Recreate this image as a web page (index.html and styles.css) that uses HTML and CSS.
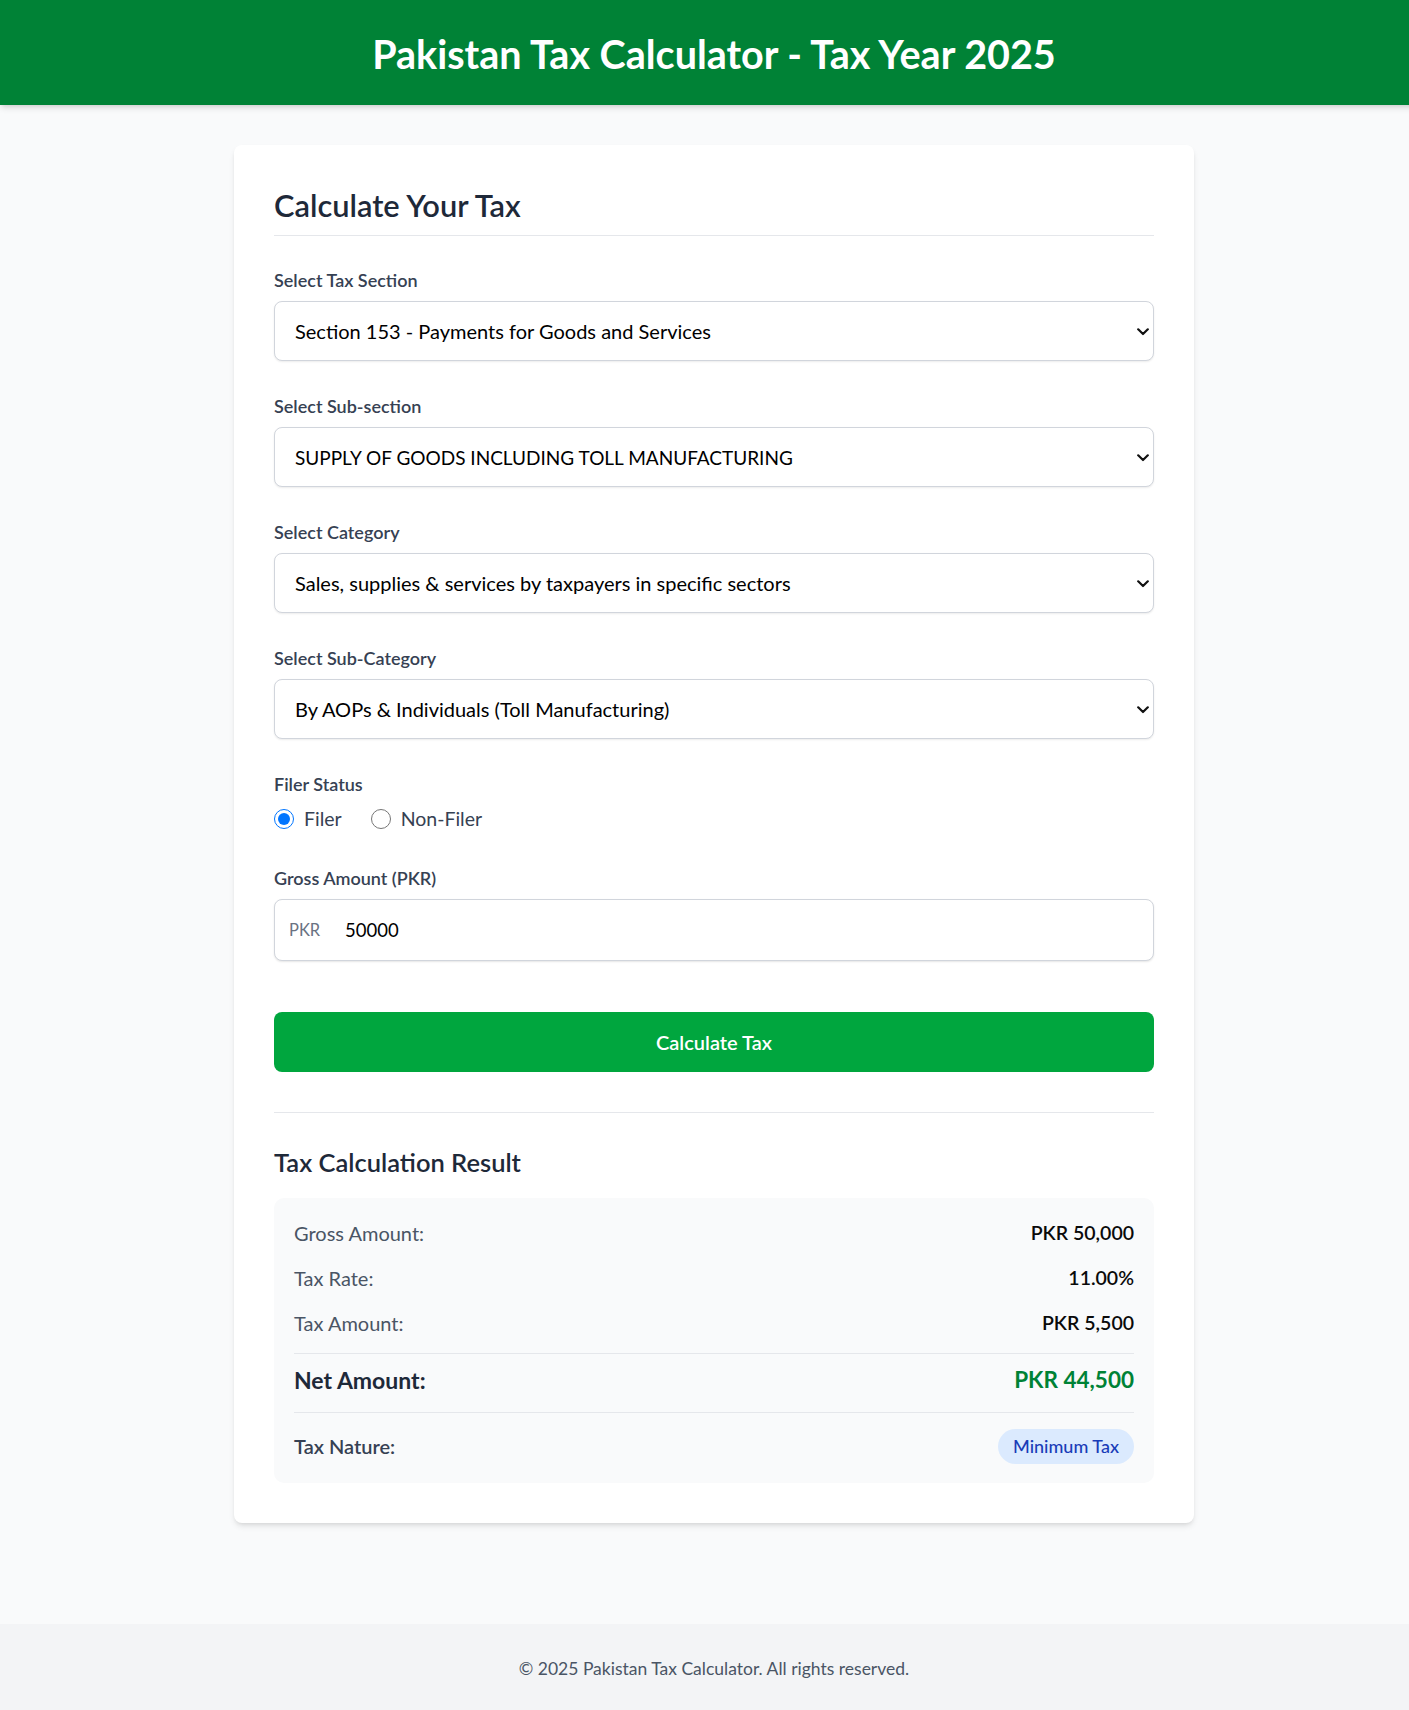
FILE: index.html
```html
<!DOCTYPE html>
<html lang="en">
<head>
<meta charset="utf-8">
<title>Pakistan Tax Calculator - Tax Year 2025</title>
<link rel="stylesheet" href="styles.css">
</head>
<body>
<div class="page">
  <header class="site-header">
    <h1 class="site-title">Pakistan Tax Calculator - Tax Year 2025</h1>
  </header>

  <main class="main">
    <section class="card">
      <h2 class="card-title">Calculate Your Tax</h2>

      <form class="form">
        <div class="field">
          <label class="field-label" for="section">Select Tax Section</label>
          <div class="select-wrap">
            <select class="select" id="section">
              <option>Section 153 - Payments for Goods and Services</option>
            </select>
            <svg class="chevron" width="12" height="8" viewBox="0 0 12 8"><polyline points="1.2,1.3 6,6 10.8,1.3" fill="none" stroke="#111" stroke-width="2.2" stroke-linecap="round" stroke-linejoin="round"/></svg>
          </div>
        </div>

        <div class="field">
          <label class="field-label" for="subsection">Select Sub-section</label>
          <div class="select-wrap">
            <select class="select select-caps" id="subsection">
              <option>SUPPLY OF GOODS INCLUDING TOLL MANUFACTURING</option>
            </select>
            <svg class="chevron" width="12" height="8" viewBox="0 0 12 8"><polyline points="1.2,1.3 6,6 10.8,1.3" fill="none" stroke="#111" stroke-width="2.2" stroke-linecap="round" stroke-linejoin="round"/></svg>
          </div>
        </div>

        <div class="field">
          <label class="field-label" for="category">Select Category</label>
          <div class="select-wrap">
            <select class="select" id="category">
              <option>Sales, supplies &amp; services by taxpayers in specific sectors</option>
            </select>
            <svg class="chevron" width="12" height="8" viewBox="0 0 12 8"><polyline points="1.2,1.3 6,6 10.8,1.3" fill="none" stroke="#111" stroke-width="2.2" stroke-linecap="round" stroke-linejoin="round"/></svg>
          </div>
        </div>

        <div class="field">
          <label class="field-label" for="subcategory">Select Sub-Category</label>
          <div class="select-wrap">
            <select class="select" id="subcategory">
              <option>By AOPs &amp; Individuals (Toll Manufacturing)</option>
            </select>
            <svg class="chevron" width="12" height="8" viewBox="0 0 12 8"><polyline points="1.2,1.3 6,6 10.8,1.3" fill="none" stroke="#111" stroke-width="2.2" stroke-linecap="round" stroke-linejoin="round"/></svg>
          </div>
        </div>

        <div class="field">
          <span class="field-label">Filer Status</span>
          <div class="radio-row">
            <label class="radio-option"><input class="radio" type="radio" name="filer" checked><span>Filer</span></label>
            <label class="radio-option"><input class="radio" type="radio" name="filer"><span>Non-Filer</span></label>
          </div>
        </div>

        <div class="field">
          <label class="field-label" for="amount">Gross Amount (PKR)</label>
          <div class="input-wrap">
            <span class="prefix">PKR</span>
            <input class="input" id="amount" type="text" value="50000">
          </div>
        </div>

        <button class="btn" type="button">Calculate Tax</button>
      </form>

      <div class="result">
        <h3 class="result-title">Tax Calculation Result</h3>
        <div class="result-box">
          <div class="row">
            <span class="row-label">Gross Amount:</span>
            <span class="row-value">PKR 50,000</span>
          </div>
          <div class="row">
            <span class="row-label">Tax Rate:</span>
            <span class="row-value">11.00%</span>
          </div>
          <div class="row">
            <span class="row-label">Tax Amount:</span>
            <span class="row-value">PKR 5,500</span>
          </div>
          <div class="row row-net">
            <span class="net-label">Net Amount:</span>
            <span class="net-value">PKR 44,500</span>
          </div>
          <div class="row row-nature">
            <span class="nature-label">Tax Nature:</span>
            <span class="badge">Minimum Tax</span>
          </div>
        </div>
      </div>
    </section>
  </main>

  <footer class="site-footer">
    <p class="footer-text">© 2025 Pakistan Tax Calculator. All rights reserved.</p>
  </footer>
</div>
</body>
</html>
```

FILE: styles.css
```css
html, body {
  margin: 0;
  padding: 0;
  overflow: hidden;
}

body {
  background: #f9fafb;
  font-family: "Lato", "Segoe UI", "Noto Sans", sans-serif;
  color: #1e2939;
  line-height: 1.6;
}

.page {
  width: 1428px;
}

.site-header {
  background: #008236;
  padding: 25px 16px 23px;
  box-shadow: 0 4px 6px -1px rgba(0,0,0,0.12), 0 2px 4px -2px rgba(0,0,0,0.1);
  position: relative;
  z-index: 1;
}

.site-title {
  margin: 0;
  text-align: center;
  color: #ffffff;
  font-size: 39.5px;
  font-weight: 700;
  line-height: 57px;
}

.main {
  padding: 40px 0 101px;
}

.card {
  width: 960px;
  box-sizing: border-box;
  margin: 0 auto;
  background: #ffffff;
  border-radius: 8px;
  padding: 40px;
  box-shadow: 0 4px 6px -1px rgba(0,0,0,0.1), 0 2px 4px -2px rgba(0,0,0,0.1);
}

.card-title {
  margin: 0 0 32px;
  font-size: 30.8px;
  font-weight: 600;
  line-height: 42px;
  padding-bottom: 8px;
  border-bottom: 1px solid #e5e7eb;
  color: #1e2939;
}

.form {
  display: flex;
  flex-direction: column;
}

.field {
  margin-bottom: 33px;
}

.field-label {
  display: block;
  font-size: 18px;
  font-weight: 600;
  line-height: 24px;
  color: #364153;
  margin-bottom: 9px;
}

.select-wrap {
  position: relative;
}

.select {
  display: block;
  width: 100%;
  height: 60px;
  box-sizing: border-box;
  -webkit-appearance: none;
  appearance: none;
  border: 1px solid #d1d5dc;
  border-radius: 8px;
  background: #ffffff;
  padding: 0 40px 0 20px;
  font-family: inherit;
  font-size: 20px;
  color: #000000;
  box-shadow: 0 1px 2px rgba(0,0,0,0.08);
  outline: none;
}

.select-caps {
  font-size: 19px;
}

.chevron {
  position: absolute;
  right: 5px;
  top: 27px;
  pointer-events: none;
}

.radio-row {
  display: flex;
  align-items: center;
  gap: 29px;
  height: 28px;
}

.radio-option {
  display: inline-flex;
  align-items: center;
  gap: 10px;
  font-size: 19.5px;
  color: #364153;
  line-height: 28px;
}

.radio {
  width: 20px;
  height: 20px;
  margin: 0;
}

.input-wrap {
  position: relative;
}

.prefix {
  position: absolute;
  left: 15px;
  top: 0;
  line-height: 62px;
  font-size: 16.5px;
  color: #6a7282;
}

.input {
  display: block;
  width: 100%;
  height: 62px;
  box-sizing: border-box;
  border: 1px solid #d1d5dc;
  border-radius: 8px;
  padding: 0 20px 0 70px;
  font-family: inherit;
  font-size: 18.5px;
  color: #000000;
  background: #ffffff;
  box-shadow: 0 1px 2px rgba(0,0,0,0.1);
  outline: none;
}

.btn {
  margin-top: 18px;
  height: 60px;
  border: none;
  border-radius: 8px;
  background: #00a63e;
  color: #ffffff;
  font-family: inherit;
  font-size: 20px;
  font-weight: 600;
}

.result {
  margin-top: 40px;
  border-top: 1px solid #e5e7eb;
  padding-top: 31px;
}

.result-title {
  margin: 0 0 18px;
  font-size: 25.5px;
  font-weight: 600;
  line-height: 36px;
  color: #1e2939;
}

.result-box {
  background: #f9fafb;
  border-radius: 10px;
  padding: 21px 20px 19px;
  display: flex;
  flex-direction: column;
  gap: 16px;
}

.row {
  display: flex;
  justify-content: space-between;
  align-items: center;
  font-size: 20px;
  line-height: 28.8px;
}

.row-label {
  color: #4a5565;
}

.row-value {
  color: #0a0a0a;
  font-size: 19.5px;
  font-weight: 600;
}

.row-net {
  border-top: 1px solid #e5e7eb;
  padding-top: 10px;
}

.net-label {
  font-size: 23px;
  font-weight: 700;
  line-height: 32px;
  color: #1e2939;
}

.net-value {
  font-size: 22.5px;
  font-weight: 700;
  line-height: 32px;
  color: #008236;
}

.row-nature {
  border-top: 1px solid #e5e7eb;
  padding-top: 16px;
}

.nature-label {
  font-weight: 600;
  color: #364153;
}

.badge {
  display: inline-block;
  background: #dbeafe;
  color: #193cb8;
  font-size: 18px;
  font-weight: 500;
  line-height: 35px;
  padding: 0 15px;
  border-radius: 999px;
}

.site-footer {
  background: #f3f4f6;
  padding: 32px 16px;
}

.footer-text {
  margin: 0;
  text-align: center;
  font-size: 17.5px;
  line-height: 25.6px;
  color: #4a5565;
}
```
